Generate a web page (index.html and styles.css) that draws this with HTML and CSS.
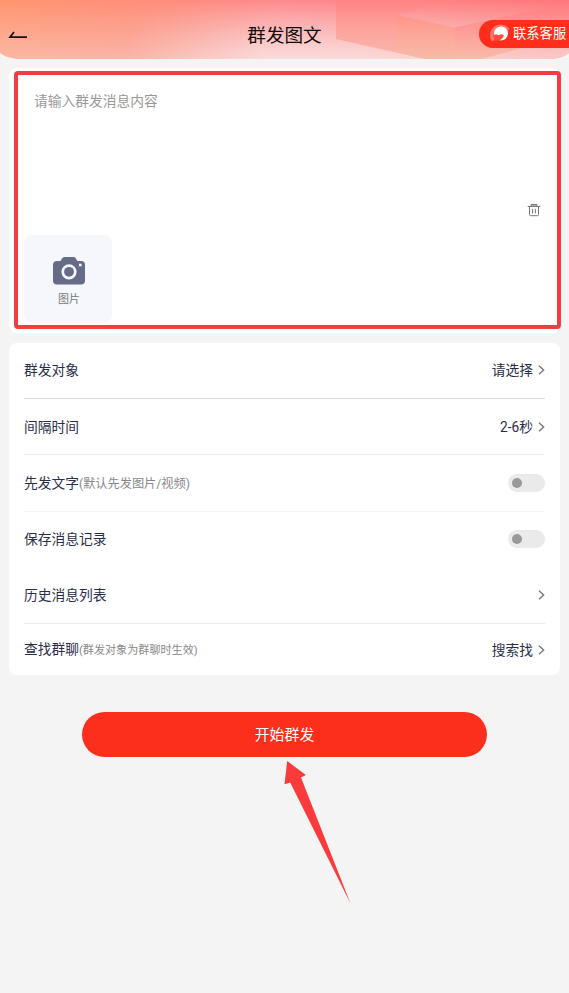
FILE: index.html
```
<!DOCTYPE html>
<html lang="zh-CN">
<head>
<meta charset="utf-8">
<title>群发图文</title>
<link rel="stylesheet" href="styles.css">
</head>
<body>
<header class="header">
  <svg class="header-bg" viewBox="0 0 569 59" preserveAspectRatio="none" aria-hidden="true">
    <defs>
      <clipPath id="shape"><path d="M0 0H569V53Q561 59 547 59H23Q8 59 0 53Z"/></clipPath>
      <linearGradient id="base" x1="0" x2="1" y1="0" y2="0">
        <stop offset="0" stop-color="#ff956e"/><stop offset=".3" stop-color="#fe8c7b"/><stop offset=".5" stop-color="#fe898e"/><stop offset=".75" stop-color="#fe8083"/><stop offset="1" stop-color="#ff7778"/>
      </linearGradient>
      <linearGradient id="fade" x1="0" x2="0" y1="0" y2="1">
        <stop offset="0" stop-color="#f8d4cf" stop-opacity="0"/><stop offset="1" stop-color="#f8d4cf" stop-opacity=".55"/>
      </linearGradient>
      <linearGradient id="glow" gradientUnits="userSpaceOnUse" x1="0" y1="0" x2="0" y2="60">
        <stop offset="0" stop-color="#fadcdb" stop-opacity="0"/><stop offset="1" stop-color="#f9e3e1" stop-opacity=".85"/>
      </linearGradient>
      <linearGradient id="side" gradientUnits="userSpaceOnUse" x1="125" y1="0" x2="520" y2="0">
        <stop offset="0" stop-color="#000"/><stop offset=".35" stop-color="#fff"/><stop offset=".6" stop-color="#fff"/><stop offset="1" stop-color="#aaa"/>
      </linearGradient>
      <mask id="glowmask" maskUnits="userSpaceOnUse" x="0" y="0" width="569" height="59"><path fill="url(#side)" d="M0 0H569V59H0Z"/></mask>
      <linearGradient id="facet" gradientUnits="userSpaceOnUse" x1="0" x2="0" y1="0" y2="59">
        <stop offset="0" stop-color="#fe8382"/><stop offset=".4" stop-color="#fd9e98"/><stop offset="1" stop-color="#f9b9ae"/>
      </linearGradient>
      <linearGradient id="facet2" gradientUnits="userSpaceOnUse" x1="0" x2="0" y1="0" y2="59">
        <stop offset="0" stop-color="#ff8180"/><stop offset=".5" stop-color="#fda394"/><stop offset="1" stop-color="#f8bba8"/>
      </linearGradient>
      <linearGradient id="facet3" gradientUnits="userSpaceOnUse" x1="0" x2="0" y1="0" y2="59">
        <stop offset="0" stop-color="#ff7879"/><stop offset=".4" stop-color="#fe9592"/><stop offset="1" stop-color="#f8bca9"/>
      </linearGradient>
    </defs>
    <g clip-path="url(#shape)">
      <path fill="url(#base)" d="M0 0H569V59H0Z"/>
      <path fill="url(#fade)" d="M0 0H569V59H0Z"/>
      <path fill="url(#glow)" mask="url(#glowmask)" d="M0 0H569V59H0Z"/>
      <path fill="url(#facet)" d="M336 0H456L396 15H400V53.500L336 39Z"/>
      <path fill="url(#facet2)" d="M396 15L455 27.500V59H425L396 52.500Z"/>
      <path fill="url(#facet3)" d="M454.500 27.500L569 3V35L482 59H454.500Z"/>
    </g>
  </svg>
  <svg class="back" viewBox="0 0 20 10" aria-hidden="true"><path d="M6 1L2 6.200H19" fill="none" stroke="#171010" stroke-width="1.7"/></svg>
  <h1 class="title">群发图文</h1>
  <div class="service">
    <svg class="service-icon" viewBox="0 0 22 22" aria-hidden="true">
      <path d="M4.500 17.500A8.300 8.300 0 1 1 19 7" fill="none" stroke="#ff766d" stroke-width="3.600"/>
      <circle cx="12" cy="10.500" r="7" fill="#fff"/>
      <path d="M5 12.200q1.800-1.800 3.700-.4q1.200 1 2.300-.2q1.600-1 3.400.2q1.200 1-.6 3q-2.200 2.800-5 2.800h-3.800z" fill="#ff4b40"/>
    </svg>
    <span>联系客服</span>
  </div>
</header>
<main>
  <section class="composer">
    <div class="editor">
      <p class="placeholder">请输入群发消息内容</p>
      <svg class="trash" viewBox="0 0 14 14" aria-hidden="true"><path d="M4.200 3.200V1.400H9.800V3.200Z" fill="#aaa"/><path d="M.7 3.500H13.300M4.200 3.200V1.400H9.800V3.200M2.500 4V11.500Q2.500 12.700 3.500 12.700H10.500Q11.500 12.700 11.500 11.500V4M5.600 5.800V10.400M8.400 5.800V10.400" fill="none" stroke="#777" stroke-width="1"/></svg>
      <div class="picture">
        <svg class="camera" viewBox="0 0 34 30" aria-hidden="true">
          <path fill="#666b88" fill-rule="evenodd" d="M5 5H8.500L10 2.600Q10.700 1 12.500 1H21.500Q23.300 1 24 2.600L25.300 5H29Q33 5 33 9V24.500Q33 28.500 29 28.500H5Q1 28.500 1 24.500V9Q1 5 5 5ZM17 8.200A7.600 7.600 0 1 0 17 23.400A7.600 7.600 0 1 0 17 8.200ZM27 7.700V10.300H29.600V7.700Z"/>
          <circle cx="17" cy="15.800" r="4.900" fill="#666b88"/>
        </svg>
        <span>图片</span>
      </div>
    </div>
  </section>
  <section class="settings">
    <div class="row strong"><span>群发对象</span><div class="value">请选择<svg class="chevron" viewBox="0 0 7 10"><path d="M1 .8L5.600 5L1 9.200"/></svg></div></div>
    <div class="row"><span>间隔时间</span><div class="value">2-6秒<svg class="chevron" viewBox="0 0 7 10"><path d="M1 .8L5.600 5L1 9.200"/></svg></div></div>
    <div class="row taller"><span>先发文字<small>(默认先发图片/视频)</small></span><i class="switch"></i></div>
    <div class="row plain"><span>保存消息记录</span><i class="switch"></i></div>
    <div class="row history"><span>历史消息列表</span><div class="value"><svg class="chevron" viewBox="0 0 7 10"><path d="M1 .8L5.600 5L1 9.200"/></svg></div></div>
    <div class="row last"><span>查找群聊<small class="note">(群发对象为群聊时生效)</small></span><div class="value">搜索找<svg class="chevron" viewBox="0 0 7 10"><path d="M1 .8L5.600 5L1 9.200"/></svg></div></div>
  </section>
  <div class="action">
    <button class="start">开始群发</button>
    <svg class="pointer" viewBox="0 0 68 145" aria-hidden="true"><path d="M4.200 1L22.800 15L18 17.400L67.500 143.500L7.200 22.400L1.500 24.300Z" fill="#fb3b3b"/></svg>
  </div>
</main>
</body>
</html>
```
FILE: styles.css
```
* { box-sizing: border-box; }
body {
  margin: 0;
  min-height: 993px;
  background: #f4f4f4;
  color: #292e49;
  font: 13.75px/20px Roboto, "Noto Sans CJK SC", sans-serif;
  overflow: hidden;
}
.header {
  position: relative;
  height: 59px;
  display: grid;
  grid-template-columns: 1fr auto 1fr;
  align-items: center;
  padding-top: 11px;
}
.header-bg { position: absolute; inset: 0; width: 100%; height: 59px; }
.back { position: relative; width: 20px; height: 10px; margin: 1px 0 0 8px; }
.title { position: relative; margin: 0; padding-top: 1px; color: #110b0b; font-size: 18.6px; font-weight: 400; line-height: 28px; }
.service {
  position: relative;
  justify-self: end;
  display: flex;
  align-items: center;
  gap: 2px;
  width: 90px;
  height: 28px;
  padding: 0 0 0 10px;
  border-radius: 14px 0 0 14px;
  background: #fe2d1c;
  color: #fff;
  font-size: 13.3px;
  white-space: nowrap;
  margin-bottom: 2px;
}
.service-icon { width: 22px; height: 22px; flex: none; }
.composer { margin: 9px 9px 0; padding: 3px 0 4px 5px; height: 265px; background: #fff; border-radius: 8px; }
.editor {
  display: flex;
  flex-direction: column;
  width: 547px;
  height: 258px;
  position: relative;
  border: 4px solid #f23e3e;
  border-radius: 4px;
  padding: 16px 16px 0 6px;
}
.placeholder { margin: 0 0 0 10px; height: 20px; color: #999; }
.trash { width: 14px; height: 14px; align-self: flex-end; margin-top: 92px; }
.picture {
  display: flex;
  flex-direction: column;
  align-items: center;
  flex: none;
  width: 88px;
  height: 88px;
  margin-top: 18px;
  padding: 21px 0 0 1px;
  border-radius: 8px;
  background: #f5f7fc;
  color: #777;
  font-size: 11px;
  line-height: 16px;
}
.picture span { padding-left: 1px; }
.camera { width: 34px; height: 30px; margin-bottom: 6px; }
.settings { margin: 10px 9px 0; padding: 0 15px; height: 332px; background: #fff; border-radius: 8px; }
.row { display: flex; align-items: center; justify-content: space-between; height: 56px; border-bottom: 1px solid #f0f0f0; white-space: nowrap; }
.row.strong { border-color: #dedede; padding-bottom: 1px; }
.row.taller { height: 57px; border-color: #f5f5f5; }
.row.plain { height: 55px; border: 0; padding-bottom: 1px; }
.row.history { height: 57px; border-color: #e9e9e9; }
.row.last { height: 51px; border: 0; }
small { color: #888; font-size: 12.2px; }
small.note { font-size: 11.1px; }
.value { display: flex; align-items: center; gap: 5px; }
.chevron { width: 7px; height: 10px; fill: none; stroke: #777; stroke-width: 1.4; }
.switch { width: 37px; height: 18px; padding: 4px; border-radius: 9px; background: #eaeaea; }
.switch::before { content: ""; display: block; width: 10px; height: 10px; border-radius: 50%; background: #99999b; }
.action { position: relative; margin: 37px 82px 0; }
.start { display: block; width: 405px; height: 45px; padding: 0 0 2px; border: 0; border-radius: 23px; background: #fc2f1c; color: #fff; font: 14.9px/43px "Noto Sans CJK SC", sans-serif; }
.pointer { position: absolute; left: 201px; top: 48px; width: 68px; height: 145px; }
```
